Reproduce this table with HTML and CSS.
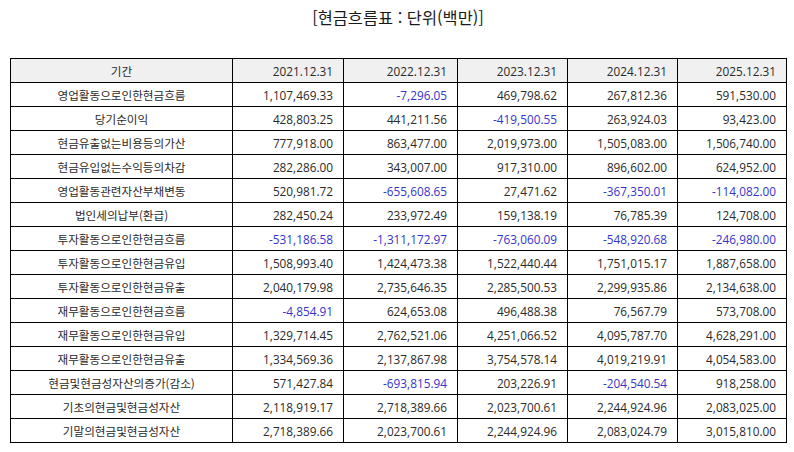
FILE: index.html
```html
<!DOCTYPE html>
<html lang="ko">
<head>
<meta charset="utf-8">
<title>현금흐름표</title>
<link rel="stylesheet" href="styles.css">
</head>
<body>
<div class="page">
  <h1 class="title">[현금흐름표 : 단위(백만)]</h1>
  <table class="cf">
    <colgroup>
      <col class="c-label"><col class="c1"><col class="c2"><col class="c3"><col class="c4"><col class="c5">
    </colgroup>
    <thead>
      <tr><th class="lab">기간</th><th>2021.12.31</th><th>2022.12.31</th><th>2023.12.31</th><th>2024.12.31</th><th>2025.12.31</th></tr>
    </thead>
    <tbody>
      <tr><td class="lab">영업활동으로인한현금흐름</td><td>1,107,469.33</td><td class="neg">-7,296.05</td><td>469,798.62</td><td>267,812.36</td><td>591,530.00</td></tr>
      <tr><td class="lab">당기순이익</td><td>428,803.25</td><td>441,211.56</td><td class="neg">-419,500.55</td><td>263,924.03</td><td>93,423.00</td></tr>
      <tr><td class="lab">현금유출없는비용등의가산</td><td>777,918.00</td><td>863,477.00</td><td>2,019,973.00</td><td>1,505,083.00</td><td>1,506,740.00</td></tr>
      <tr><td class="lab">현금유입없는수익등의차감</td><td>282,286.00</td><td>343,007.00</td><td>917,310.00</td><td>896,602.00</td><td>624,952.00</td></tr>
      <tr><td class="lab">영업활동관련자산부채변동</td><td>520,981.72</td><td class="neg">-655,608.65</td><td>27,471.62</td><td class="neg">-367,350.01</td><td class="neg">-114,082.00</td></tr>
      <tr><td class="lab">법인세의납부(환급)</td><td>282,450.24</td><td>233,972.49</td><td>159,138.19</td><td>76,785.39</td><td>124,708.00</td></tr>
      <tr><td class="lab">투자활동으로인한현금흐름</td><td class="neg">-531,186.58</td><td class="neg">-1,311,172.97</td><td class="neg">-763,060.09</td><td class="neg">-548,920.68</td><td class="neg">-246,980.00</td></tr>
      <tr><td class="lab">투자활동으로인한현금유입</td><td>1,508,993.40</td><td>1,424,473.38</td><td>1,522,440.44</td><td>1,751,015.17</td><td>1,887,658.00</td></tr>
      <tr><td class="lab">투자활동으로인한현금유출</td><td>2,040,179.98</td><td>2,735,646.35</td><td>2,285,500.53</td><td>2,299,935.86</td><td>2,134,638.00</td></tr>
      <tr><td class="lab">재무활동으로인한현금흐름</td><td class="neg">-4,854.91</td><td>624,653.08</td><td>496,488.38</td><td>76,567.79</td><td>573,708.00</td></tr>
      <tr><td class="lab">재무활동으로인한현금유입</td><td>1,329,714.45</td><td>2,762,521.06</td><td>4,251,066.52</td><td>4,095,787.70</td><td>4,628,291.00</td></tr>
      <tr><td class="lab">재무활동으로인한현금유출</td><td>1,334,569.36</td><td>2,137,867.98</td><td>3,754,578.14</td><td>4,019,219.91</td><td>4,054,583.00</td></tr>
      <tr><td class="lab">현금및현금성자산의증가(감소)</td><td>571,427.84</td><td class="neg">-693,815.94</td><td>203,226.91</td><td class="neg">-204,540.54</td><td>918,258.00</td></tr>
      <tr><td class="lab">기초의현금및현금성자산</td><td>2,118,919.17</td><td>2,718,389.66</td><td>2,023,700.61</td><td>2,244,924.96</td><td>2,083,025.00</td></tr>
      <tr><td class="lab">기말의현금및현금성자산</td><td>2,718,389.66</td><td>2,023,700.61</td><td>2,244,924.96</td><td>2,083,024.79</td><td>3,015,810.00</td></tr>
    </tbody>
  </table>
</div>
</body>
</html>
```

FILE: styles.css
```css
html, body {
  margin: 0;
  padding: 0;
  background: #ffffff;
}

.page {
  width: 794px;
  padding: 0 8px 0 10px;
  box-sizing: border-box;
  font-family: "Open Sans", "Noto Sans CJK KR", sans-serif;
  color: #2a2a2a;
}

.title {
  margin: 0;
  height: 58px;
  padding-top: 5px;
  box-sizing: border-box;
  font-family: "Noto Sans CJK KR", sans-serif;
  font-size: 16.4px;
  font-weight: normal;
  line-height: 24px;
  text-align: center;
  color: #1a1a1a;
}

.cf {
  width: 776px;
  border-collapse: collapse;
  table-layout: fixed;
  font-size: 11.8px;
}

.c-label { width: 222px; }
.c1 { width: 111px; }
.c2 { width: 114px; }
.c3 { width: 110px; }
.c4 { width: 110px; }
.c5 { width: 109px; }

.cf th,
.cf td {
  border: 1px solid #000000;
  height: 23px;
  padding: 0 10px 0 4px;
  text-align: right;
  font-weight: normal;
  line-height: 16px;
  white-space: nowrap;
}

.cf th {
  background: #f0f0f0;
}

.cf .lab {
  text-align: center;
  padding: 0 4px;
  font-family: "Noto Sans CJK KR", sans-serif;
  font-size: 11.6px;
}

.cf .neg {
  color: #3434cc;
}
```
